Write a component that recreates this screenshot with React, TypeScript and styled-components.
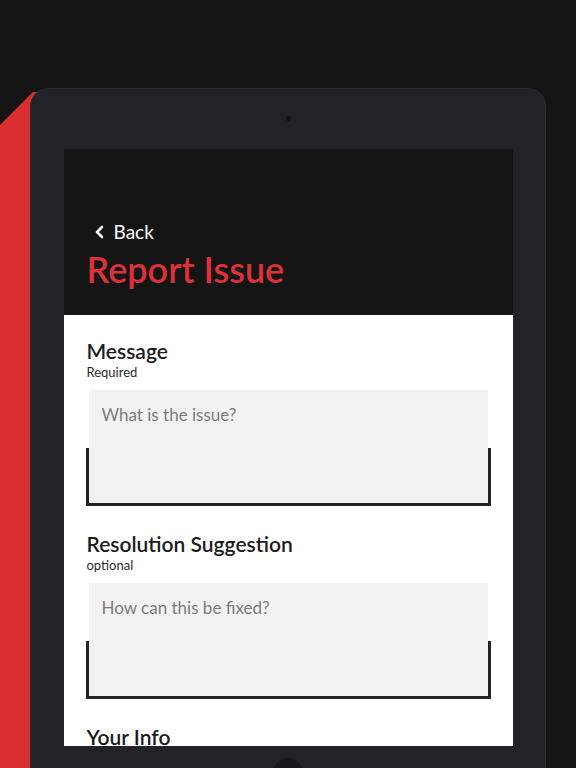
import styled, { createGlobalStyle } from "styled-components"

const GlobalStyle = createGlobalStyle`
  html, body {
    margin: 0;
    padding: 0;
    background: #141414;
  }
  * {
    box-sizing: border-box;
  }
`

const Stage = styled.main`
  position: relative;
  width: 576px;
  height: 768px;
  overflow: hidden;
  padding: 88px 0 0 30px;
  font-family: Lato, "Open Sans", sans-serif;

  &::before {
    content: "";
    position: absolute;
    left: 0;
    top: 92px;
    width: 60px;
    height: 700px;
    background: #d92f31;
    clip-path: polygon(0 33px, 33px 0, 100% 0, 100% 100%, 0 100%);
  }
`

const Tablet = styled.div`
  position: relative;
  width: 516px;
  height: 760px;
  background: #222328;
  border: 1px solid #2b2c31;
  border-radius: 18px;
  display: flex;
  flex-direction: column;
  align-items: center;
`

const Bezel = styled.div`
  height: 60px;
  display: flex;
  align-items: center;
  justify-content: center;
`

const Camera = styled.span`
  width: 5px;
  height: 5px;
  margin-top: -2px;
  border-radius: 50%;
  background: #141416;
`

const Screen = styled.div`
  width: 449px;
  height: 597px;
  display: flex;
  flex-direction: column;
  overflow: hidden;
  background: #fff;
`

const Header = styled.header`
  height: 166px;
  flex-shrink: 0;
  background: #151516;
  padding: 0 23px 25px;
  display: flex;
  flex-direction: column;
  justify-content: flex-end;
`

const BackLink = styled.a`
  display: flex;
  align-items: center;
  gap: 8px;
  margin: 0 0 4px 7px;
  color: #fff;
  font-size: 19px;
  line-height: 24px;
  text-decoration: none;
`

const Title = styled.h1`
  margin: 0;
  color: #db3237;
  font-size: 36px;
  font-weight: 600;
  line-height: 42px;
`

const Body = styled.section`
  flex: 1;
  padding: 23px 22px 0 22px;
  display: flex;
  flex-direction: column;
  gap: 25px;
`

const Field = styled.div`
  display: flex;
  flex-direction: column;
`

const Label = styled.h2`
  margin: 0 0 0 1px;
  color: #1c1c1e;
  font-size: 21px;
  font-weight: 600;
  line-height: 26px;
`

const Hint = styled.span`
  margin-left: 1px;
  color: #2a2a2c;
  font-size: 13px;
  line-height: 16px;
`

const Bracket = styled.div`
  margin-top: 10px;
  width: 405px;
  padding: 0 3px 3px;
  background: linear-gradient(to bottom, transparent 58px, #222225 58px);
`

const Input = styled.textarea`
  display: block;
  width: 100%;
  height: 113px;
  resize: none;
  border: none;
  outline: none;
  background: #f2f2f2;
  padding: 13px 13px;
  font-family: inherit;
  font-size: 17px;
  line-height: 24px;
  color: #222;

  &::placeholder {
    color: #7b7b7b;
  }
`

const HomeButton = styled.span`
  margin-top: 12px;
  width: 30px;
  height: 30px;
  border-radius: 50%;
  background: #18181b;
`

const ChevronLeft = () => (
  <svg width="12" height="14" viewBox="0 0 12 14" fill="none">
    <path d="M8 2 L3 7 L8 12" stroke="#fff" strokeWidth="2.6" strokeLinecap="round" strokeLinejoin="round" />
  </svg>
)

function App() {
  return (
    <Stage>
      <GlobalStyle />
      <Tablet>
        <Bezel>
          <Camera />
        </Bezel>
        <Screen>
          <Header>
            <BackLink href="#">
              <ChevronLeft />
              Back
            </BackLink>
            <Title>Report Issue</Title>
          </Header>
          <Body>
            <Field>
              <Label>Message</Label>
              <Hint>Required</Hint>
              <Bracket>
                <Input placeholder="What is the issue?" />
              </Bracket>
            </Field>
            <Field>
              <Label>Resolution Suggestion</Label>
              <Hint>optional</Hint>
              <Bracket>
                <Input placeholder="How can this be fixed?" />
              </Bracket>
            </Field>
            <Field>
              <Label>Your Info</Label>
            </Field>
          </Body>
        </Screen>
        <HomeButton />
      </Tablet>
    </Stage>
  )
}

export default App
